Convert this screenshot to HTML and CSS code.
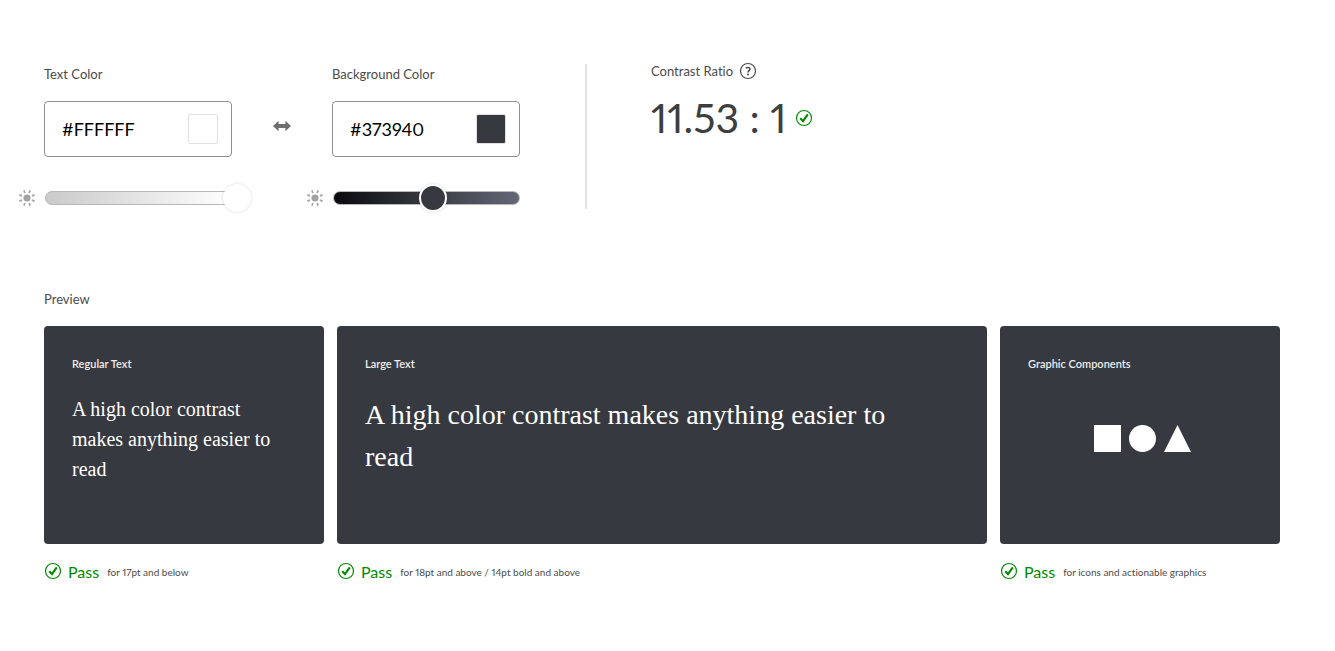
FILE: index.html
```html
<!DOCTYPE html>
<html lang="en">
<head>
<meta charset="utf-8">
<meta name="viewport" content="width=device-width, initial-scale=1">
<title>Contrast Checker</title>
<link rel="stylesheet" href="styles.css">
</head>
<body>
<svg class="sprite" aria-hidden="true">
  <symbol id="sun" viewBox="0 0 16 16">
    <circle cx="8" cy="8" r="3.6" fill="#a3a3a3"/>
    <path d="M5.900 3L4.900.4M10.100 3L11.100.4M5.900 13L4.900 15.600M10.100 13l1 2.600M3 5.900L.4 4.900M3 10.100L.4 11.100M13 5.900l2.600-1M13 10.100l2.600 1" stroke="#a3a3a3" stroke-width="1.7" fill="none"/>
  </symbol>
  <symbol id="check" viewBox="0 0 18 18">
    <circle cx="9" cy="9" r="7.5" fill="none" stroke="#008a00" stroke-width="1.2"/>
    <path d="M5.2 9.3l2.8 2.9 4.8-6.8" fill="none" stroke="#008a00" stroke-width="2.1"/>
  </symbol>
</svg>
<main class="page">
  <section class="controls">
    <div class="color-field">
      <label class="label" for="text-color">Text Color</label>
      <div class="hex-box">
        <input class="hex-input" id="text-color" type="text" value="#FFFFFF">
        <button class="swatch swatch-text" type="button" aria-label="Pick text color"></button>
      </div>
      <div class="slider-row">
        <svg class="sun"><use href="#sun"/></svg>
        <div class="track track-text">
          <input class="range range-text" type="range" min="0" max="100" value="100" aria-label="Text color lightness">
        </div>
      </div>
    </div>
    <button class="swap" type="button" aria-label="Swap colors">
      <svg width="18" height="12" viewBox="0 0 18 12"><path d="M0 6l5.600-5.200v3.300h6.800V.8L18 6l-5.600 5.200V7.900H5.600v3.300z" fill="#6e6e6e"/></svg>
    </button>
    <div class="color-field">
      <label class="label" for="background-color">Background Color</label>
      <div class="hex-box">
        <input class="hex-input" id="background-color" type="text" value="#373940">
        <button class="swatch swatch-background" type="button" aria-label="Pick background color"></button>
      </div>
      <div class="slider-row">
        <svg class="sun"><use href="#sun"/></svg>
        <div class="track track-background">
          <input class="range range-background" type="range" min="0" max="100" value="48" aria-label="Background color lightness">
        </div>
      </div>
    </div>
    <div class="result">
      <div class="result-head">
        <span class="label">Contrast Ratio</span>
        <button class="help" type="button" aria-label="About contrast ratio">
          <svg width="18" height="18" viewBox="0 0 18 18" fill="none" stroke="#4b4b4b"><circle cx="9" cy="9" r="7.5" stroke-width="1.2"/><path d="M6.8 6.2C7.9 5.2 11 5.1 11 7.1c0 1.4-2 1.6-2 3.5" stroke-width="1.6"/><circle cx="9" cy="12.6" r="1" fill="#4b4b4b" stroke="none"/></svg>
        </button>
      </div>
      <div class="ratio"><span>11.53 : 1</span><svg class="check"><use href="#check"/></svg></div>
    </div>
  </section>

  <section class="preview">
    <h2 class="label">Preview</h2>
    <div class="cards">
      <article class="item">
        <div class="card">
          <h3 class="card-title">Regular Text</h3>
          <p class="sample">A high color contrast makes anything easier to read</p>
        </div>
        <div class="status"><svg class="check"><use href="#check"/></svg><span class="pass">Pass</span><span class="note">for 17pt and below</span></div>
      </article>
      <article class="item">
        <div class="card">
          <h3 class="card-title">Large Text</h3>
          <p class="sample sample-large">A high color contrast makes anything easier to read</p>
        </div>
        <div class="status"><svg class="check"><use href="#check"/></svg><span class="pass">Pass</span><span class="note">for 18pt and above / 14pt bold and above</span></div>
      </article>
      <article class="item">
        <div class="card">
          <h3 class="card-title">Graphic Components</h3>
          <svg class="shapes" width="98" height="28" viewBox="0 0 98 28" fill="#fff"><path d="M0 0h27v27H0z"/><circle cx="48.5" cy="13.5" r="13.5"/><path d="M83.5 0l13.5 27H70z"/></svg>
        </div>
        <div class="status"><svg class="check"><use href="#check"/></svg><span class="pass">Pass</span><span class="note">for icons and actionable graphics</span></div>
      </article>
    </div>
  </section>
</main>
</body>
</html>
```

FILE: styles.css
```css
* {
  box-sizing: border-box;
}

body {
  margin: 0;
  background: #fff;
  color: #4b4b4b;
  font-family: Lato, "Noto Sans", sans-serif;
  font-variant-numeric: proportional-nums;
  font-variant-ligatures: none;
}

button {
  border: 0;
  padding: 0;
  background: none;
  cursor: pointer;
}

.sprite {
  display: none;
}

.page {
  padding: 64px 55px 64px 44px;
}

.controls {
  display: flex;
  align-items: flex-start;
}

.color-field {
  width: 188px;
}

.label {
  display: block;
  margin: 0;
  font-size: 13px;
  font-weight: 400;
  line-height: 20px;
}

.hex-box {
  display: flex;
  align-items: center;
  justify-content: space-between;
  height: 56px;
  margin-top: 17px;
  padding: 0 13px 0 17px;
  border: 1px solid #909090;
  border-radius: 4px;
}

.hex-input {
  width: 100px;
  padding: 0;
  border: 0;
  outline: 0;
  background: none;
  color: #000;
  font-family: inherit;
  font-size: 18px;
  font-variant-numeric: inherit;
}

.swatch {
  width: 30px;
  height: 30px;
  border: 1px solid #e1e1e1;
  border-radius: 2px;
}

.swatch-text {
  background: #fff;
}

.swatch-background {
  background: #373940;
}

.slider-row {
  display: flex;
  align-items: center;
  gap: 10px;
  height: 30px;
  margin: 26px 0 0 -25px;
}

.sun {
  flex: none;
  width: 16px;
  height: 16px;
}

.track {
  display: flex;
  align-items: center;
  flex: none;
  width: 187px;
  height: 14px;
  border: 1px solid #b8b8b8;
  border-radius: 7px;
}

.track-text {
  background: linear-gradient(to right, #cacaca, #fff);
}

.track-background {
  background: linear-gradient(to right, #0b0b0d, #373940 50%, #646776);
}

.range {
  appearance: none;
  flex: none;
  width: 205px;
  height: 28px;
  margin: 0;
  background: none;
}

.range::-webkit-slider-thumb {
  appearance: none;
  width: 28px;
  height: 28px;
  border: 2px solid #fff;
  border-radius: 50%;
  box-shadow: 0 0 3px rgba(0, 0, 0, 0.16);
}

.range-text::-webkit-slider-thumb {
  background: #fff;
}

.range-background::-webkit-slider-thumb {
  background: #373940;
}

.swap {
  display: flex;
  justify-content: center;
  width: 100px;
  margin-top: 56px;
}

.result {
  min-height: 145px;
  margin-left: 65px;
  padding-left: 64px;
  border-left: 2px solid #e4e4e4;
}

.result-head {
  display: flex;
  align-items: center;
  gap: 6px;
  height: 14px;
}

.help {
  display: flex;
}

.ratio {
  display: flex;
  align-items: center;
  gap: 8px;
  margin-top: 12px;
  color: #3e3e3e;
  font-size: 41px;
  line-height: 56px;
}

.check {
  flex: none;
  width: 18px;
  height: 18px;
}

.preview {
  margin-top: 76px;
}

.cards {
  display: grid;
  grid-template-columns: 280px minmax(0, 1fr) 280px;
  gap: 13px;
  margin-top: 17px;
}

.card {
  display: flex;
  flex-direction: column;
  min-height: 218px;
  padding: 28px;
  border-radius: 4px;
  background: #373940;
  color: #fff;
}

.card-title {
  margin: 0;
  color: #ececec;
  font-size: 11px;
  font-weight: 600;
  line-height: 20px;
}

.sample {
  margin: 20px 0 0;
  font-family: "Liberation Serif", serif;
  font-size: 20px;
  line-height: 30px;
}

.sample-large {
  padding-right: 28px;
  font-size: 28px;
  line-height: 42px;
}

.shapes {
  align-self: center;
  margin: 51px 0 0 6px;
}

.status {
  display: flex;
  align-items: center;
  gap: 6px;
  height: 24px;
  margin-top: 15px;
}

.pass {
  color: #008a00;
  font-size: 16px;
}

.note {
  padding: 2px 0 0 2px;
  font-size: 10px;
}
```
